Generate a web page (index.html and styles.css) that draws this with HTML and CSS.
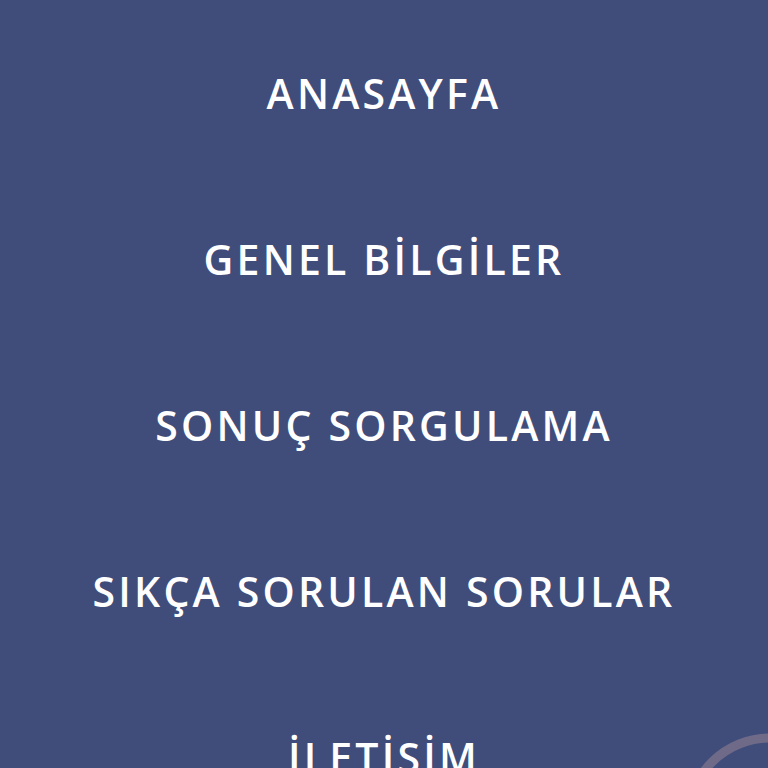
FILE: index.html
```html
<!DOCTYPE html>
<html lang="tr">
<head>
<meta charset="utf-8">
<link rel="stylesheet" href="styles.css">
</head>
<body>
<nav class="menu">
  <ul class="menu-list">
    <li class="menu-item"><a href="#">ANASAYFA</a></li>
    <li class="menu-item"><a href="#">GENEL BİLGİLER</a></li>
    <li class="menu-item"><a href="#">SONUÇ SORGULAMA</a></li>
    <li class="menu-item"><a href="#">SIKÇA SORULAN SORULAR</a></li>
    <li class="menu-item"><a href="#">İLETİSİM</a></li>
  </ul>
</nav>
<svg class="scroll-ring" width="120" height="100" viewBox="0 0 120 100">
  <circle cx="122" cy="152" r="82" fill="none" stroke="#6f6a88" stroke-width="9"/>
</svg>
</body>
</html>
```
FILE: styles.css
```css
html, body {
  margin: 0;
  padding: 0;
  background: #404d7b;
  overflow: hidden;
  height: 768px;
}
.menu {
  padding-top: 10px;
}
.menu-list {
  list-style: none;
  margin: 0;
  padding: 0;
  display: flex;
  flex-direction: column;
}
.menu-item {
  height: 166px;
  display: flex;
  align-items: center;
  justify-content: center;
}
.menu-item a {
  color: #ffffff;
  text-decoration: none;
  font-family: "Open Sans", "Noto Sans", sans-serif;
  font-weight: 600;
  font-size: 41px;
  letter-spacing: 3.2px;
  line-height: 1;
}
.scroll-ring {
  position: fixed;
  right: 0;
  bottom: 0;
}
```
